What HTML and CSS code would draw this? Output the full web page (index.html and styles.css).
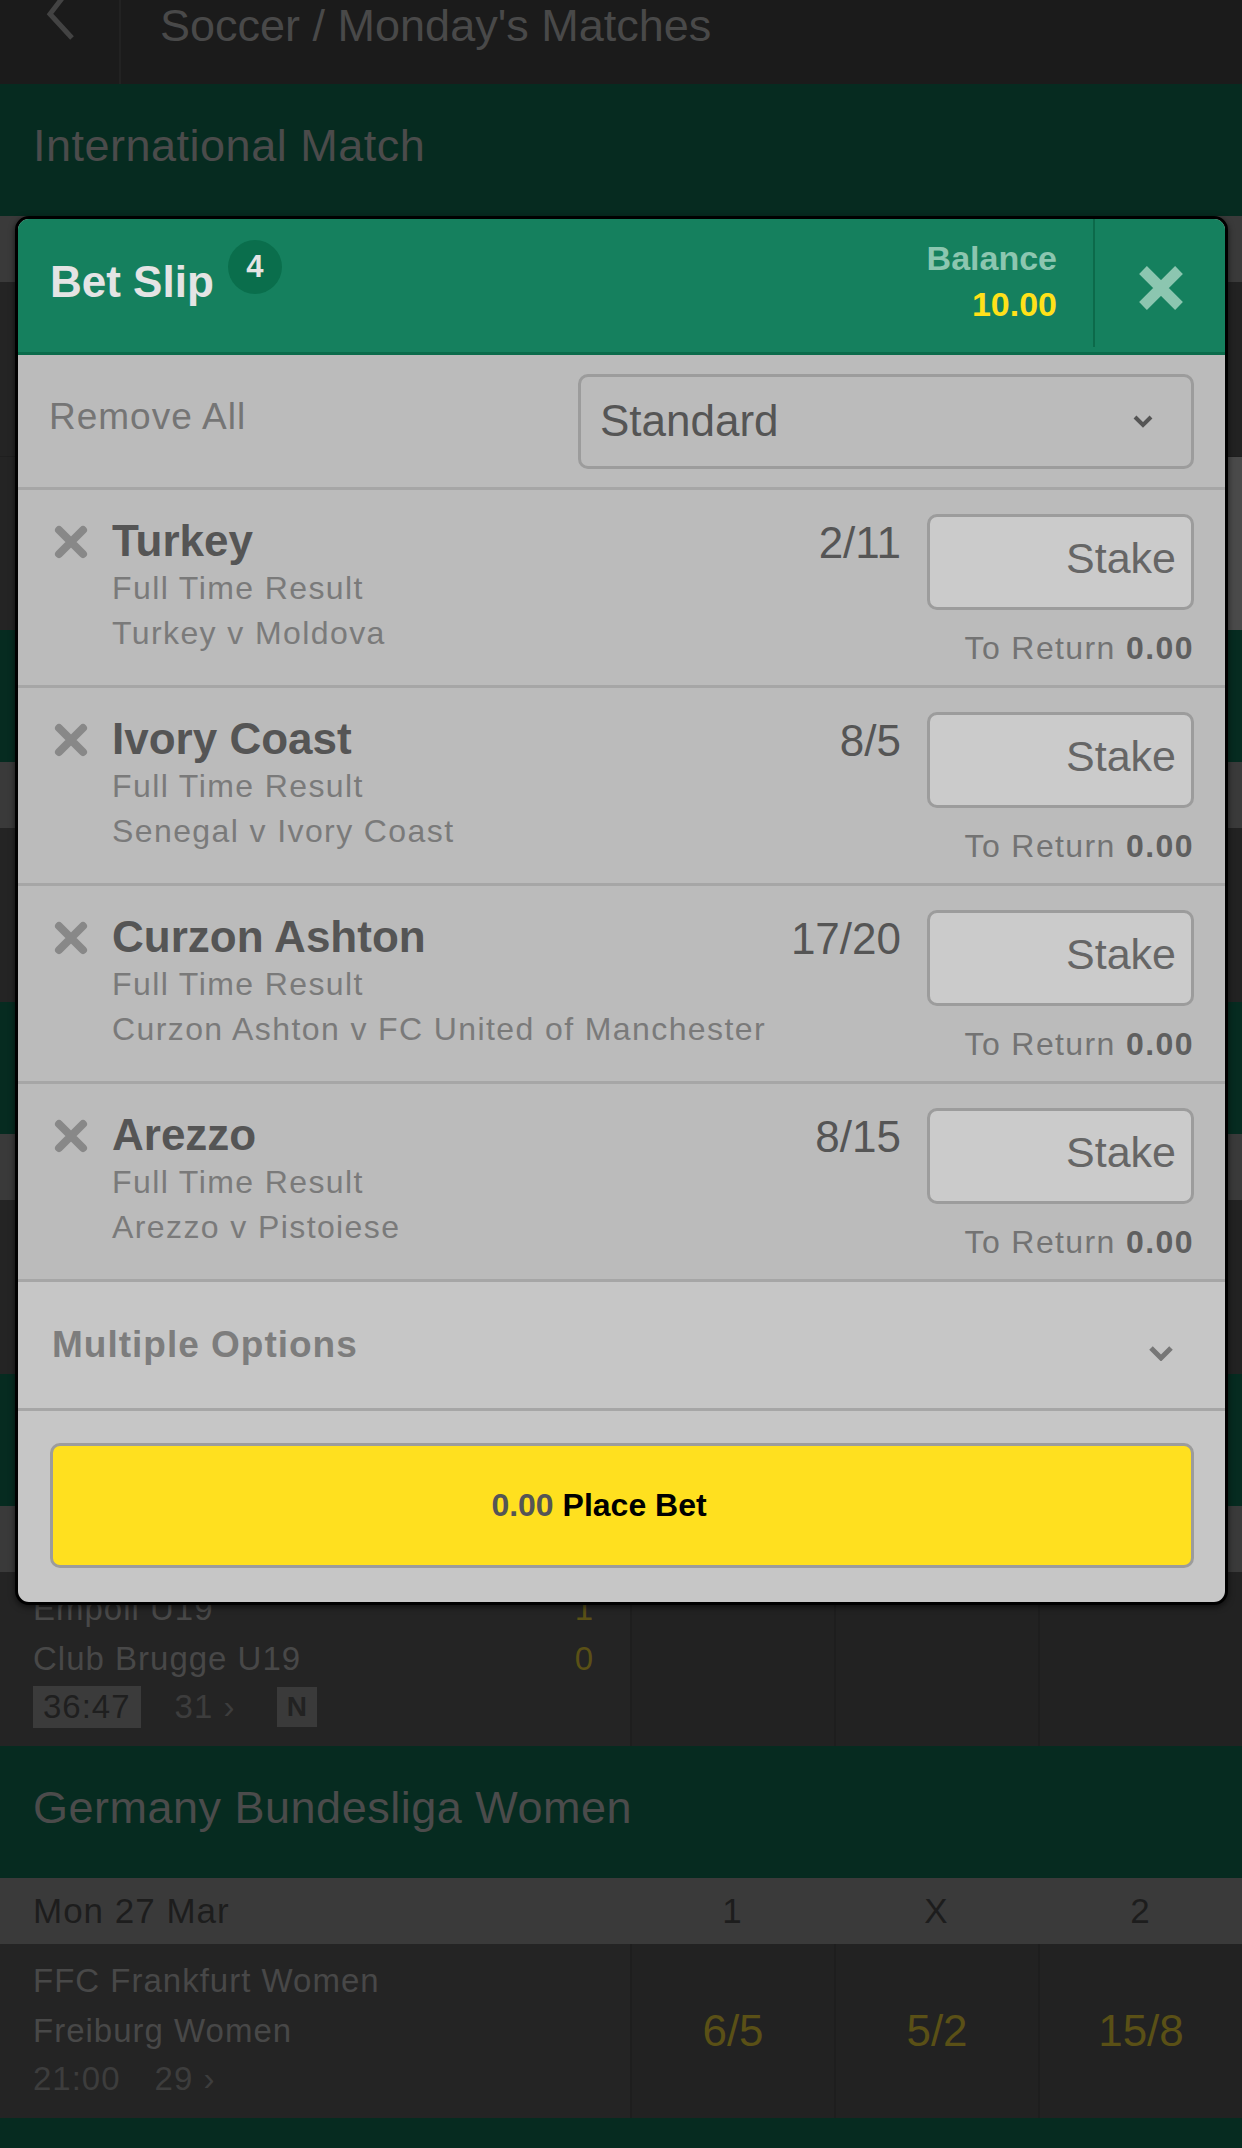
FILE: index.html
```html
<!DOCTYPE html>
<html lang="en">

<head>
  <meta charset="UTF-8">
  <meta name="viewport" content="width=device-width, initial-scale=1.0">
  <title>Bet Slip</title>
  <link rel="stylesheet" href="styles.css">
</head>

<body>
  <div class="page">
    <header class="topbar">
      <div class="topbar-back">
        <svg width="30" height="50" viewBox="0 0 30 50"><polyline points="26,-12 6,14 28,38" fill="none" stroke="#434343" stroke-width="5"/></svg>
      </div>
      <h1 class="topbar-title">Soccer / Monday's Matches</h1>
    </header>

    <!-- sections behind the slip -->
    <section class="comp">
      <h2 class="comp-title">International Match</h2>
      <div class="day-head"><span></span><span></span><span></span><span></span></div>
      <div class="match"><div class="teams"></div><div class="odd"></div><div class="odd"></div><div class="odd"></div></div>
      <div class="match match-split"><div class="teams"></div><div class="odd"></div><div class="odd"></div><div class="odd odd-picked"></div></div>
    </section>
    <section class="comp">
      <h2 class="comp-title"></h2>
      <div class="day-head"><span></span><span></span><span></span><span></span></div>
      <div class="match"><div class="teams"></div><div class="odd"></div><div class="odd"></div><div class="odd"></div></div>
    </section>
    <section class="comp">
      <h2 class="comp-title"></h2>
      <div class="day-head"><span></span><span></span><span></span><span></span></div>
      <div class="match"><div class="teams"></div><div class="odd"></div><div class="odd"></div><div class="odd"></div></div>
    </section>
    <section class="comp">
      <h2 class="comp-title"></h2>
      <div class="day-head"><span></span><span></span><span></span><span></span></div>
      <div class="match">
        <div class="teams">
          <div class="team"><span>Empoli U19</span><span class="score">1</span></div>
          <div class="team"><span>Club Brugge U19</span><span class="score">0</span></div>
          <div class="meta">
            <span class="clock">36:47</span>
            <span class="markets">31 ›</span>
            <span class="tag">N</span>
          </div>
        </div>
        <div class="odd"></div><div class="odd"></div><div class="odd"></div>
      </div>
    </section>
    <section class="comp">
      <h2 class="comp-title">Germany Bundesliga Women</h2>
      <div class="day-head">
        <span class="date">Mon 27 Mar</span><span class="col">1</span><span class="col">X</span><span class="col">2</span>
      </div>
      <div class="match">
        <div class="teams">
          <div class="team"><span>FFC Frankfurt Women</span></div>
          <div class="team"><span>Freiburg Women</span></div>
          <div class="meta">
            <span class="kickoff">21:00</span>
            <span class="markets">29 ›</span>
          </div>
        </div>
        <div class="odd">6/5</div><div class="odd">5/2</div><div class="odd">15/8</div>
      </div>
    </section>
    <section class="comp">
      <h2 class="comp-title"></h2>
    </section>

    <!-- bet slip -->
    <div class="slip">
      <div class="slip-head">
        <div class="slip-title">
          <span class="slip-name">Bet Slip</span>
          <span class="slip-count">4</span>
        </div>
        <div class="balance">
          <div class="balance-label">Balance</div>
          <div class="balance-value">10.00</div>
        </div>
        <button class="slip-close">
          <svg width="44" height="44" viewBox="0 0 44 44"><path d="M4 4 L40 40 M40 4 L4 40" stroke="#8cc6b0" stroke-width="11"/></svg>
        </button>
      </div>

      <div class="slip-tools">
        <span class="remove-all">Remove All</span>
        <div class="bet-type">
          <span>Standard</span>
          <svg width="22" height="14" viewBox="0 0 22 14"><polyline points="3,3 11,11 19,3" fill="none" stroke="#555" stroke-width="4"/></svg>
        </div>
      </div>

      <div class="bet">
        <svg class="bet-remove" width="34" height="34" viewBox="0 0 34 34"><path d="M5 5 L29 29 M29 5 L5 29" stroke="#888" stroke-width="8" stroke-linecap="round"/></svg>
        <div class="bet-info">
          <div class="bet-name">Turkey</div>
          <div class="bet-sub">Full Time Result</div>
          <div class="bet-sub">Turkey v Moldova</div>
        </div>
        <div class="bet-odds">2/11</div>
        <div class="bet-stake">
          <div class="stake-box">Stake</div>
          <div class="to-return">To Return <b>0.00</b></div>
        </div>
      </div>

      <div class="bet">
        <svg class="bet-remove" width="34" height="34" viewBox="0 0 34 34"><path d="M5 5 L29 29 M29 5 L5 29" stroke="#888" stroke-width="8" stroke-linecap="round"/></svg>
        <div class="bet-info">
          <div class="bet-name">Ivory Coast</div>
          <div class="bet-sub">Full Time Result</div>
          <div class="bet-sub">Senegal v Ivory Coast</div>
        </div>
        <div class="bet-odds">8/5</div>
        <div class="bet-stake">
          <div class="stake-box">Stake</div>
          <div class="to-return">To Return <b>0.00</b></div>
        </div>
      </div>

      <div class="bet">
        <svg class="bet-remove" width="34" height="34" viewBox="0 0 34 34"><path d="M5 5 L29 29 M29 5 L5 29" stroke="#888" stroke-width="8" stroke-linecap="round"/></svg>
        <div class="bet-info">
          <div class="bet-name">Curzon Ashton</div>
          <div class="bet-sub">Full Time Result</div>
          <div class="bet-sub">Curzon Ashton v FC United of Manchester</div>
        </div>
        <div class="bet-odds">17/20</div>
        <div class="bet-stake">
          <div class="stake-box">Stake</div>
          <div class="to-return">To Return <b>0.00</b></div>
        </div>
      </div>

      <div class="bet">
        <svg class="bet-remove" width="34" height="34" viewBox="0 0 34 34"><path d="M5 5 L29 29 M29 5 L5 29" stroke="#888" stroke-width="8" stroke-linecap="round"/></svg>
        <div class="bet-info">
          <div class="bet-name">Arezzo</div>
          <div class="bet-sub">Full Time Result</div>
          <div class="bet-sub">Arezzo v Pistoiese</div>
        </div>
        <div class="bet-odds">8/15</div>
        <div class="bet-stake">
          <div class="stake-box">Stake</div>
          <div class="to-return">To Return <b>0.00</b></div>
        </div>
      </div>

      <div class="multiples">
        <span>Multiple Options</span>
        <svg width="26" height="16" viewBox="0 0 26 16"><polyline points="3,3 13,13 23,3" fill="none" stroke="#777" stroke-width="5"/></svg>
      </div>

      <div class="slip-foot">
        <button class="place-bet"><span class="place-amount">0.00</span> Place Bet</button>
      </div>
    </div>
  </div>
</body>

</html>
```

FILE: styles.css
```css
* {
  box-sizing: border-box;
}

body {
  margin: 0;
  background: #232323;
  font-family: "Liberation Sans", Arial, sans-serif;
}

.page {
  position: relative;
  width: 1242px;
  height: 2148px;
  overflow: hidden;
}

/* top bar */
.topbar {
  display: flex;
  height: 84px;
  background: #1b1b1b;
}

.topbar-back {
  width: 121px;
  padding-left: 44px;
  border-right: 2px solid #222;
}

.topbar-title {
  margin: 0;
  padding-left: 39px;
  font-size: 45px;
  line-height: 52px;
  font-weight: normal;
  color: #494949;
}

/* competitions */
.comp-title {
  display: flex;
  align-items: center;
  height: 132px;
  margin: 0;
  padding: 0 0 8px 33px;
  background: #062b20;
  color: #4b4b4b;
  font-size: 45px;
  font-weight: normal;
  letter-spacing: 0.5px;
}

.day-head,
.match {
  display: grid;
  grid-template-columns: 630px 1fr 1fr 1fr;
}

.day-head {
  align-items: center;
  height: 66px;
  background: #3a3a3a;
  color: #1d1d1d;
  font-size: 35px;
}

.day-head .date {
  padding-left: 33px;
  letter-spacing: 1px;
}

.day-head .col {
  text-align: center;
}

.match {
  height: 174px;
  background: #242424;
}

.match-split {
  border-top: 1px solid #1f1f1f;
}

.teams {
  padding: 12px 36px 0 33px;
  color: #484848;
  font-size: 33px;
  letter-spacing: 1px;
}

.team {
  display: flex;
  justify-content: space-between;
  line-height: 50px;
}

.score {
  color: #5a5016;
}

.meta {
  display: flex;
  align-items: center;
  height: 46px;
  color: #3d3d3d;
}

.clock {
  height: 42px;
  padding: 0 10px;
  line-height: 42px;
  background: #3b3b3b;
  color: #1f1f1f;
}

.markets {
  margin-left: 34px;
}

.tag {
  width: 40px;
  height: 40px;
  margin-left: 42px;
  background: #3a3a3a;
  color: #222;
  font-size: 28px;
  font-weight: bold;
  line-height: 40px;
  text-align: center;
}

.odd {
  display: flex;
  align-items: center;
  justify-content: center;
  border-left: 2px solid #1e1e1e;
  background: #222;
  color: #5a5016;
  font-size: 44px;
}

.odd-picked {
  background: #4a4a4a;
}

/* bet slip */
.slip {
  position: absolute;
  top: 216px;
  left: 15px;
  width: 1213px;
  border: 3px solid #000;
  border-radius: 14px;
  overflow: hidden;
  background: #c6c6c6;
  box-shadow: 0 2px 6px rgba(0, 0, 0, 0.6);
}

.slip-head {
  display: flex;
  height: 136px;
  border-bottom: 3px solid #0b6b4b;
  background: #15805e;
}

.slip-title {
  display: flex;
  align-items: flex-start;
  flex: 1;
  padding: 21px 0 0 32px;
}

.slip-name {
  margin-top: 17px;
  color: #e4e4e4;
  font-size: 44px;
  font-weight: bold;
  line-height: 50px;
}

.slip-count {
  display: flex;
  align-items: center;
  justify-content: center;
  width: 54px;
  height: 54px;
  margin-left: 14px;
  border-radius: 50%;
  background: #0a6e4c;
  color: #e4e4e4;
  font-size: 31px;
  font-weight: bold;
}

.balance {
  padding: 16px 36px 0 0;
  font-size: 34px;
  font-weight: bold;
  line-height: 46px;
  text-align: right;
}

.balance-label {
  color: #8cc6b0;
}

.balance-value {
  color: #ffe11a;
}

.slip-close {
  display: flex;
  align-items: center;
  justify-content: center;
  width: 132px;
  margin: 0 0 5px;
  padding: 10px 0 0 2px;
  border: none;
  border-left: 2px solid #0c6a4a;
  background: none;
}

.slip-tools {
  display: flex;
  align-items: center;
  justify-content: space-between;
  height: 135px;
  padding: 0 31px 0 31px;
  border-bottom: 3px solid #a6a6a6;
  background: #bbb;
}

.remove-all {
  margin-bottom: 8px;
  color: #757575;
  font-size: 37px;
  letter-spacing: 1px;
}

.bet-type {
  display: flex;
  align-items: center;
  justify-content: space-between;
  width: 616px;
  height: 95px;
  padding: 0 37px 0 19px;
  border: 3px solid #9c9c9c;
  border-radius: 10px;
  color: #555;
  font-size: 44px;
}

.bet {
  display: flex;
  height: 198px;
  padding: 24px 31px 0 36px;
  border-bottom: 3px solid #a6a6a6;
  background: #bbb;
}

.bet-remove {
  flex-shrink: 0;
  margin: 11px 24px 0 0;
}

.bet-info {
  flex: 1;
  padding-top: 2px;
}

.bet-name {
  color: #555;
  font-size: 44px;
  font-weight: bold;
  line-height: 50px;
}

.bet-sub {
  color: #7a7a7a;
  font-size: 32px;
  letter-spacing: 1.4px;
  line-height: 45px;
}

.bet-odds {
  margin-right: 26px;
  padding-top: 5px;
  color: #555;
  font-size: 44px;
  line-height: 48px;
}

.bet-stake {
  display: flex;
  flex-direction: column;
  align-items: flex-end;
  width: 267px;
}

.stake-box {
  display: flex;
  align-items: center;
  justify-content: flex-end;
  width: 267px;
  height: 96px;
  padding: 0 15px 8px 0;
  border: 3px solid #9c9c9c;
  border-radius: 10px;
  background: #cbcbcb;
  color: #666;
  font-size: 43px;
}

.to-return {
  margin-top: 18px;
  color: #737373;
  font-size: 32px;
  letter-spacing: 1.4px;
  line-height: 40px;
  white-space: nowrap;
}

.to-return b {
  color: #5f5f5f;
}

.multiples {
  display: flex;
  align-items: center;
  justify-content: space-between;
  height: 129px;
  padding: 0 51px 0 34px;
  border-bottom: 3px solid #a6a6a6;
  color: #7d7d7d;
  font-size: 37px;
  font-weight: bold;
  letter-spacing: 1px;
}

.multiples svg {
  margin-top: 16px;
}

.slip-foot {
  height: 191px;
  padding: 32px 31px 0 32px;
}

.place-bet {
  width: 100%;
  height: 125px;
  padding: 0 46px 0 0;
  border: 3px solid #9c9c9c;
  border-radius: 10px;
  background: #ffe01f;
  color: #000;
  font-family: "Liberation Sans", Arial, sans-serif;
  font-size: 32px;
  font-weight: bold;
}

.place-amount {
  color: #555;
}
```
